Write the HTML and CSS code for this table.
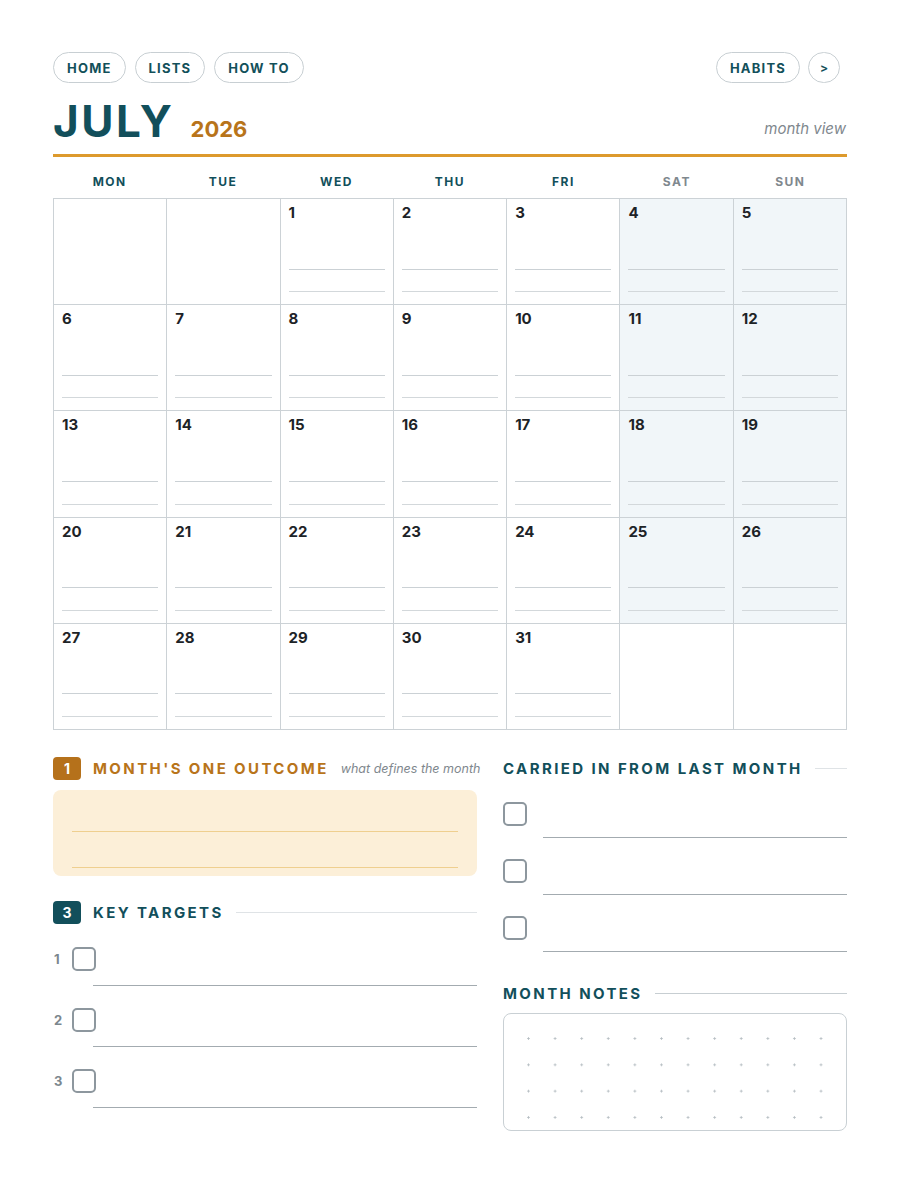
FILE: index.html
```html
<!DOCTYPE html>
<html lang="en">
<head>
<meta charset="utf-8">
<title>July 2026 — Month View</title>
<link rel="stylesheet" href="styles.css">
</head>
<body>
<div class="page">
  <nav class="nav">
    <div class="nav-group">
      <a class="pill">HOME</a>
      <a class="pill">LISTS</a>
      <a class="pill">HOW TO</a>
    </div>
    <div class="nav-group nav-group-right">
      <a class="pill">HABITS</a>
      <a class="pill pill-round">&gt;</a>
    </div>
  </nav>

  <header class="title-row">
    <div class="title">
      <span class="month">JULY</span>
      <span class="year">2026</span>
    </div>
    <span class="view">month view</span>
  </header>

  <div class="weekdays">
    <div>MON</div><div>TUE</div><div>WED</div><div>THU</div><div>FRI</div>
    <div class="we">SAT</div><div class="we">SUN</div>
  </div>

  <div class="cal">
    <div class="cell empty"></div>
    <div class="cell empty"></div>
    <div class="cell"><span class="num">1</span><i class="ln"></i><i class="ln ln2"></i></div>
    <div class="cell"><span class="num">2</span><i class="ln"></i><i class="ln ln2"></i></div>
    <div class="cell"><span class="num">3</span><i class="ln"></i><i class="ln ln2"></i></div>
    <div class="cell wkd"><span class="num">4</span><i class="ln"></i><i class="ln ln2"></i></div>
    <div class="cell wkd"><span class="num">5</span><i class="ln"></i><i class="ln ln2"></i></div>

    <div class="cell"><span class="num">6</span><i class="ln"></i><i class="ln ln2"></i></div>
    <div class="cell"><span class="num">7</span><i class="ln"></i><i class="ln ln2"></i></div>
    <div class="cell"><span class="num">8</span><i class="ln"></i><i class="ln ln2"></i></div>
    <div class="cell"><span class="num">9</span><i class="ln"></i><i class="ln ln2"></i></div>
    <div class="cell"><span class="num">10</span><i class="ln"></i><i class="ln ln2"></i></div>
    <div class="cell wkd"><span class="num">11</span><i class="ln"></i><i class="ln ln2"></i></div>
    <div class="cell wkd"><span class="num">12</span><i class="ln"></i><i class="ln ln2"></i></div>

    <div class="cell"><span class="num">13</span><i class="ln"></i><i class="ln ln2"></i></div>
    <div class="cell"><span class="num">14</span><i class="ln"></i><i class="ln ln2"></i></div>
    <div class="cell"><span class="num">15</span><i class="ln"></i><i class="ln ln2"></i></div>
    <div class="cell"><span class="num">16</span><i class="ln"></i><i class="ln ln2"></i></div>
    <div class="cell"><span class="num">17</span><i class="ln"></i><i class="ln ln2"></i></div>
    <div class="cell wkd"><span class="num">18</span><i class="ln"></i><i class="ln ln2"></i></div>
    <div class="cell wkd"><span class="num">19</span><i class="ln"></i><i class="ln ln2"></i></div>

    <div class="cell"><span class="num">20</span><i class="ln"></i><i class="ln ln2"></i></div>
    <div class="cell"><span class="num">21</span><i class="ln"></i><i class="ln ln2"></i></div>
    <div class="cell"><span class="num">22</span><i class="ln"></i><i class="ln ln2"></i></div>
    <div class="cell"><span class="num">23</span><i class="ln"></i><i class="ln ln2"></i></div>
    <div class="cell"><span class="num">24</span><i class="ln"></i><i class="ln ln2"></i></div>
    <div class="cell wkd"><span class="num">25</span><i class="ln"></i><i class="ln ln2"></i></div>
    <div class="cell wkd"><span class="num">26</span><i class="ln"></i><i class="ln ln2"></i></div>

    <div class="cell"><span class="num">27</span><i class="ln"></i><i class="ln ln2"></i></div>
    <div class="cell"><span class="num">28</span><i class="ln"></i><i class="ln ln2"></i></div>
    <div class="cell"><span class="num">29</span><i class="ln"></i><i class="ln ln2"></i></div>
    <div class="cell"><span class="num">30</span><i class="ln"></i><i class="ln ln2"></i></div>
    <div class="cell"><span class="num">31</span><i class="ln"></i><i class="ln ln2"></i></div>
    <div class="cell empty"></div>
    <div class="cell empty"></div>
  </div>

  <section class="bottom">
    <div class="col-left">
      <div class="sec-head">
        <span class="badge badge-amber">1</span>
        <h2 class="sec-title amber">MONTH'S ONE OUTCOME</h2>
        <span class="sec-sub">what defines the month</span>
      </div>
      <div class="outcome">
        <i class="o-line"></i>
        <i class="o-line"></i>
      </div>

      <div class="sec-head kt-head">
        <span class="badge badge-teal">3</span>
        <h2 class="sec-title">KEY TARGETS</h2>
        <span class="rule"></span>
      </div>
      <div class="kt-list">
        <div class="kt-item">
          <div class="kt-row"><span class="kt-num">1</span><span class="box"></span></div>
          <i class="write-line kt-line"></i>
        </div>
        <div class="kt-item">
          <div class="kt-row"><span class="kt-num">2</span><span class="box"></span></div>
          <i class="write-line kt-line"></i>
        </div>
        <div class="kt-item">
          <div class="kt-row"><span class="kt-num">3</span><span class="box"></span></div>
          <i class="write-line kt-line"></i>
        </div>
      </div>
    </div>

    <div class="col-right">
      <div class="sec-head">
        <h2 class="sec-title">CARRIED IN FROM LAST MONTH</h2>
        <span class="rule"></span>
      </div>
      <div class="ci-list">
        <div class="ci-item"><span class="box"></span><i class="write-line ci-line"></i></div>
        <div class="ci-item"><span class="box"></span><i class="write-line ci-line"></i></div>
        <div class="ci-item"><span class="box"></span><i class="write-line ci-line"></i></div>
      </div>

      <div class="sec-head notes-head">
        <h2 class="sec-title">MONTH NOTES</h2>
        <span class="rule rule-dark"></span>
      </div>
      <div class="notes"></div>
    </div>
  </section>
</div>
</body>
</html>
```

FILE: styles.css
```css
* { box-sizing: border-box; }

html, body {
  margin: 0;
  padding: 0;
  background: #ffffff;
}

body {
  font-family: Inter, "Noto Sans", "Liberation Sans", sans-serif;
  color: #1d2327;
}

.page {
  width: 900px;
  padding: 52px 53px 40px;
}

/* ---------- nav ---------- */
.nav {
  display: flex;
  justify-content: space-between;
  align-items: center;
}

.nav-group {
  display: flex;
  gap: 9px;
}

.nav-group-right {
  gap: 8px;
  margin-right: 7px;
}

.pill {
  display: inline-flex;
  align-items: center;
  justify-content: center;
  height: 31px;
  padding: 0 13px;
  border: 1.5px solid #c8cfd3;
  border-radius: 16px;
  font-size: 13px;
  font-weight: 700;
  letter-spacing: 1.2px;
  color: #12505a;
  text-decoration: none;
}

.pill-round {
  width: 32px;
  padding: 0;
  letter-spacing: 0;
  font-size: 12px;
}

/* ---------- title ---------- */
.title-row {
  display: flex;
  justify-content: space-between;
  align-items: flex-end;
  margin-top: 14px;
  padding-bottom: 9px;
  border-bottom: 3px solid #dd9a2d;
}

.title {
  display: flex;
  align-items: baseline;
  gap: 16px;
}

.month {
  font-size: 44px;
  line-height: 48px;
  font-weight: 700;
  letter-spacing: 2.6px;
  color: #124f5b;
}

.year {
  font-size: 22px;
  font-weight: 700;
  color: #b8741a;
}

.view {
  font-size: 15px;
  line-height: 18px;
  margin-bottom: 7px;
  font-style: italic;
  color: #7f888e;
  margin-right: 1px;
}

/* ---------- weekdays ---------- */
.weekdays {
  display: grid;
  grid-template-columns: repeat(7, 1fr);
  padding: 17px 0 8px;
}

.weekdays div {
  text-align: center;
  font-size: 12px;
  line-height: 16px;
  font-weight: 700;
  letter-spacing: 1.5px;
  color: #124f5b;
}

.weekdays .we {
  color: #7f888e;
}

/* ---------- calendar ---------- */
.cal {
  display: grid;
  grid-template-columns: repeat(7, 1fr);
  grid-auto-rows: 106.2px;
  border-top: 1.5px solid #ccd2d6;
  border-left: 1.5px solid #ccd2d6;
}

.cell {
  display: flex;
  flex-direction: column;
  padding: 5px 8px 12px;
  border-right: 1px solid #ccd2d6;
  border-bottom: 1px solid #ccd2d6;
  background: #ffffff;
}

.cal .cell:nth-child(7n) {
  border-right-width: 1.5px;
}

.cal .cell:nth-last-child(-n+7) {
  border-bottom-width: 1.5px;
}

.cell.wkd {
  background: #f1f6f9;
}

.num {
  font-size: 15px;
  line-height: 18px;
  font-weight: 700;
  color: #1d2327;
}

.ln {
  display: block;
  margin-top: auto;
  border-top: 1.5px solid #cbd1d5;
}

.ln2 {
  margin-top: 21.5px;
  border-top: 1px solid #d3d8db;
}

/* ---------- bottom ---------- */
.bottom {
  display: grid;
  grid-template-columns: 424px 1fr;
  gap: 26px;
  margin-top: 27px;
  align-items: start;
}

.sec-head {
  display: flex;
  align-items: center;
  height: 23px;
}

.badge {
  display: inline-flex;
  align-items: center;
  justify-content: center;
  width: 28px;
  height: 23px;
  border-radius: 4px;
  color: #ffffff;
  font-size: 14px;
  font-weight: 700;
  margin-right: 12px;
  flex: none;
}

.badge-amber { background: #b5711b; }
.badge-teal { background: #124f5b; }

.sec-title {
  margin: 0;
  font-size: 15px;
  font-weight: 700;
  letter-spacing: 2.4px;
  color: #124f5b;
  white-space: nowrap;
}

.sec-title.amber {
  color: #b8741a;
}

.sec-sub {
  margin-left: 12px;
  font-size: 12.5px;
  font-style: italic;
  color: #7f888e;
  white-space: nowrap;
}

.rule {
  flex: 1;
  margin-left: 12px;
  border-top: 1px solid #dfe3e6;
}

.rule-dark {
  border-top-color: #c7ced2;
}

/* outcome box */
.outcome {
  display: flex;
  flex-direction: column;
  margin-top: 10px;
  height: 86px;
  padding: 41px 19px 0;
  background: #fcefd8;
  border-radius: 8px;
}

.o-line {
  display: block;
  border-top: 1.5px solid #efcf8f;
}

.o-line + .o-line {
  margin-top: 35px;
}

/* key targets */
.kt-head {
  margin-top: 25px;
}

.kt-list {
  display: flex;
  flex-direction: column;
  gap: 22px;
  margin-top: 23px;
}

.kt-row {
  display: flex;
  align-items: center;
}

.kt-num {
  width: 19px;
  padding-left: 1px;
  font-size: 13px;
  font-weight: 700;
  color: #7c878e;
}

.box {
  display: block;
  width: 24px;
  height: 24px;
  border: 2px solid #8d979e;
  border-radius: 5px;
  flex: none;
}

.write-line {
  display: block;
  border-top: 1.5px solid #a3abb0;
}

.kt-line {
  margin-top: 14px;
  margin-left: 40px;
}

/* carried in */
.ci-list {
  display: flex;
  flex-direction: column;
  gap: 21px;
  margin-top: 22px;
}

.ci-line {
  margin-top: 11px;
  margin-left: 40px;
}

/* notes */
.notes-head {
  margin-top: 30px;
}

.notes {
  margin-top: 8px;
  height: 118px;
  border: 1.5px solid #c9d0d4;
  border-radius: 8px;
  background-image: radial-gradient(circle, #b4bcc1 0.9px, transparent 1.3px);
  background-size: 26.6px 26.3px;
  background-position: 11.2px 11.4px;
}
```
